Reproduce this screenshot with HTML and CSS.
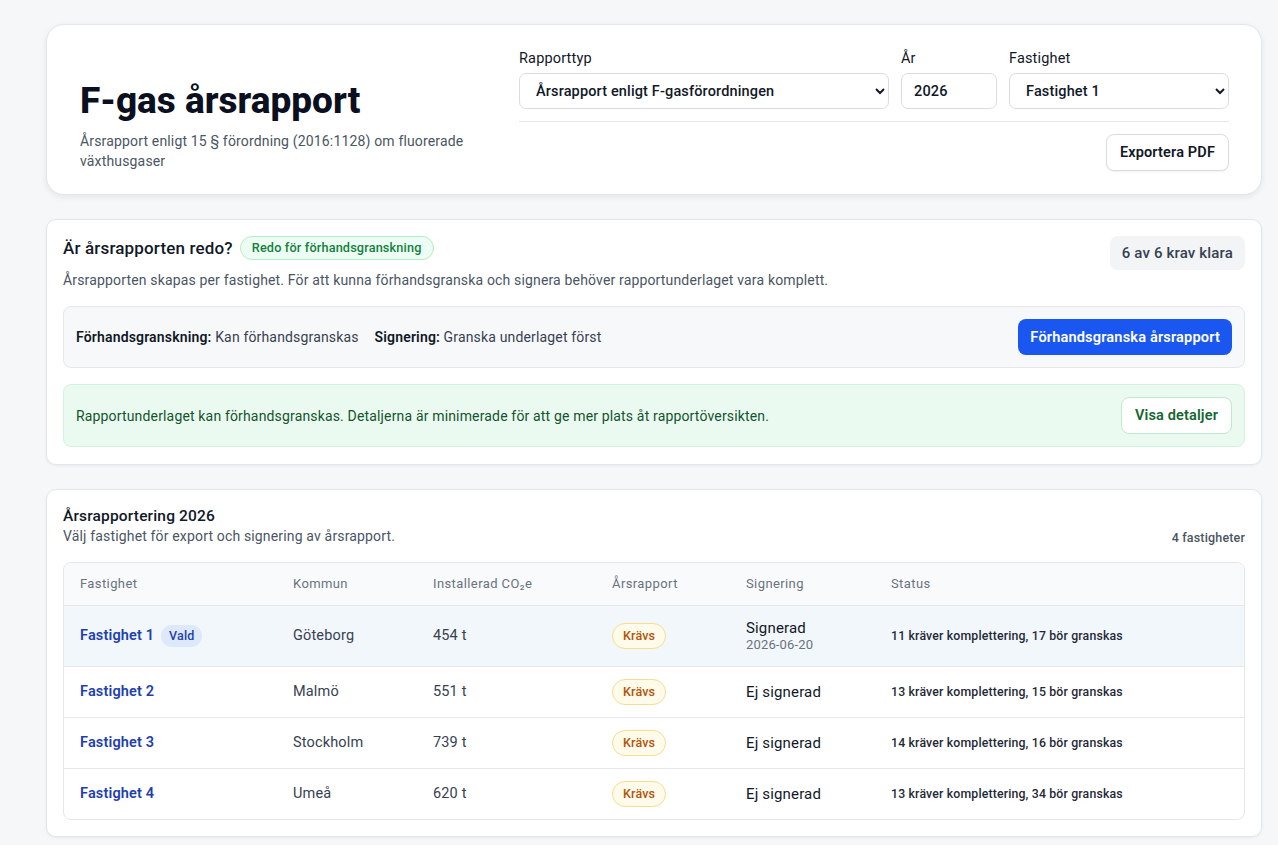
FILE: index.html
```html
<!DOCTYPE html>
<html lang="sv">
<head>
    <meta charset="UTF-8">
    <meta name="viewport" content="width=device-width, initial-scale=1.0">
    <title>F-gas årsrapport</title>
    <link rel="stylesheet" href="styles.css">
</head>
<body>
    <div class="page">
        <header class="card hero">
            <div class="hero-text">
                <h1>F-gas årsrapport</h1>
                <p>Årsrapport enligt 15 § förordning (2016:1128) om fluorerade växthusgaser</p>
            </div>
            <div class="hero-controls">
                <div class="filters">
                    <label class="field field-type">
                        <span>Rapporttyp</span>
                        <select>
                            <option>Årsrapport enligt F-gasförordningen</option>
                        </select>
                    </label>
                    <label class="field field-year">
                        <span>År</span>
                        <input type="text" value="2026">
                    </label>
                    <label class="field field-prop">
                        <span>Fastighet</span>
                        <select>
                            <option>Fastighet 1</option>
                            <option>Fastighet 2</option>
                            <option>Fastighet 3</option>
                            <option>Fastighet 4</option>
                        </select>
                    </label>
                </div>
                <div class="hero-actions">
                    <button class="btn btn-outline">Exportera PDF</button>
                </div>
            </div>
        </header>

        <section class="card ready">
            <div class="ready-head">
                <div>
                    <div class="ready-title">
                        <h2>Är årsrapporten redo?</h2>
                        <span class="badge badge-green">Redo för förhandsgranskning</span>
                    </div>
                    <p class="muted">Årsrapporten skapas per fastighet. För att kunna förhandsgranska och signera behöver rapportunderlaget vara komplett.</p>
                </div>
                <span class="count-pill">6 av 6 krav klara</span>
            </div>

            <div class="status-box">
                <div class="status-items">
                    <span><b>Förhandsgranskning:</b> Kan förhandsgranskas</span>
                    <span><b>Signering:</b> Granska underlaget först</span>
                </div>
                <button class="btn btn-primary">Förhandsgranska årsrapport</button>
            </div>

            <div class="notice">
                <span>Rapportunderlaget kan förhandsgranskas. Detaljerna är minimerade för att ge mer plats åt rapportöversikten.</span>
                <button class="btn btn-green">Visa detaljer</button>
            </div>
        </section>

        <section class="card overview">
            <div class="overview-head">
                <div>
                    <h3>Årsrapportering 2026</h3>
                    <p class="muted">Välj fastighet för export och signering av årsrapport.</p>
                </div>
                <span class="total">4 fastigheter</span>
            </div>

            <div class="table-wrap">
                <table>
                    <thead>
                        <tr>
                            <th class="col-name">Fastighet</th>
                            <th class="col-kommun">Kommun</th>
                            <th class="col-co2">Installerad CO₂e</th>
                            <th class="col-report">Årsrapport</th>
                            <th class="col-sign">Signering</th>
                            <th>Status</th>
                        </tr>
                    </thead>
                    <tbody>
                        <tr class="selected">
                            <td><a href="#" class="prop-link">Fastighet 1</a> <span class="badge badge-blue">Vald</span></td>
                            <td>Göteborg</td>
                            <td>454 t</td>
                            <td><span class="badge badge-amber">Krävs</span></td>
                            <td class="sign">Signerad<small>2026-06-20</small></td>
                            <td class="status">11 kräver komplettering, 17 bör granskas</td>
                        </tr>
                        <tr>
                            <td><a href="#" class="prop-link">Fastighet 2</a></td>
                            <td>Malmö</td>
                            <td>551 t</td>
                            <td><span class="badge badge-amber">Krävs</span></td>
                            <td class="sign">Ej signerad</td>
                            <td class="status">13 kräver komplettering, 15 bör granskas</td>
                        </tr>
                        <tr>
                            <td><a href="#" class="prop-link">Fastighet 3</a></td>
                            <td>Stockholm</td>
                            <td>739 t</td>
                            <td><span class="badge badge-amber">Krävs</span></td>
                            <td class="sign">Ej signerad</td>
                            <td class="status">14 kräver komplettering, 16 bör granskas</td>
                        </tr>
                        <tr>
                            <td><a href="#" class="prop-link">Fastighet 4</a></td>
                            <td>Umeå</td>
                            <td>620 t</td>
                            <td><span class="badge badge-amber">Krävs</span></td>
                            <td class="sign">Ej signerad</td>
                            <td class="status">13 kräver komplettering, 34 bör granskas</td>
                        </tr>
                    </tbody>
                </table>
            </div>
        </section>
    </div>
</body>
</html>
```

FILE: styles.css
```css
* {
    box-sizing: border-box;
}
body {
    margin: 0;
    font-family: Roboto, 'Liberation Sans', Arial, sans-serif;
    letter-spacing: 0.01em;
    color: #111827;
    background-color: #f6f7f9;
}
.page {
    padding: 24px 16px 24px 46px;
    display: flex;
    flex-direction: column;
    gap: 24px;
}
.card {
    background-color: white;
    border: 1px solid #e3e7ec;
    border-radius: 10px;
    box-shadow: 0 1px 3px rgba(15,23,42,0.06);
}
.muted {
    margin: 0;
    color: #4b5563;
    font-size: 14px;
    line-height: 20px;
}

/* header */
.hero {
    border-radius: 18px;
    padding: 25px 32px 23px 33px;
    display: flex;
    justify-content: space-between;
    align-items: center;
    box-shadow: 0 2px 6px rgba(15,23,42,0.08);
}
.hero h1 {
    margin: 0 0 8px;
    font-size: 37px;
    line-height: 44px;
    font-weight: 800;
    letter-spacing: 0;
    color: #0b1020;
}
.hero-text {
    padding-top: 28px;
}
.hero-text p {
    margin: 0;
    width: 385px;
    font-size: 14px;
    line-height: 20px;
    color: #4b5563;
}
.hero-controls {
    width: 710px;
}
.filters {
    display: flex;
    gap: 12px;
    padding-bottom: 12px;
    border-bottom: 1px solid #e5e7eb;
}
.field {
    display: flex;
    flex-direction: column;
    gap: 6px;
    font-size: 14.5px;
    font-weight: 400;
    color: #111827;
}
.field-type { width: 370px; }
.field-year { width: 96px; }
.field-prop { flex: 1; }
select, input {
    height: 36px;
    padding: 0 10px 0 12px;
    border: 1px solid #d9dde3;
    border-radius: 7px;
    background-color: white;
    font-family: inherit;
    font-size: 14.5px;
    font-weight: 500;
    letter-spacing: 0.01em;
    color: #111827;
}
.hero-actions {
    display: flex;
    justify-content: flex-end;
    padding-top: 12px;
}
.btn {
    font-family: inherit;
    font-size: 14.5px;
    font-weight: 600;
    letter-spacing: 0.01em;
    border-radius: 8px;
    cursor: pointer;
}
.btn-outline {
    height: 37px;
    padding: 0 13px;
    background-color: white;
    color: #111827;
    border: 1px solid #d9dde3;
    box-shadow: 0 1px 2px rgba(0,0,0,0.06);
}
.btn-primary {
    height: 36px;
    padding: 0 12px;
    font-size: 14.6px;
    background-color: #1a56f0;
    color: white;
    border: none;
}
.btn-green {
    height: 37px;
    padding: 0 13px;
    background-color: white;
    color: #166534;
    border: 1px solid #bfe9cf;
}

/* readiness */
.ready {
    padding: 16px 16px 17px;
}
.ready-head {
    display: flex;
    justify-content: space-between;
    align-items: flex-start;
}
.ready-title {
    display: flex;
    align-items: center;
    gap: 7px;
    margin-bottom: 10px;
}
.ready-title h2 {
    margin: 0;
    font-size: 17px;
    font-weight: 500;
}
.count-pill {
    padding: 8px 12px;
    border-radius: 8px;
    background-color: #f2f4f6;
    font-size: 15px;
    font-weight: 500;
    color: #374151;
}
.badge {
    display: inline-block;
    border-radius: 999px;
    font-size: 12px;
    font-weight: 500;
    line-height: 16px;
}
.badge-green {
    padding: 3px 11px;
    font-size: 12.7px;
    background-color: #ecfdf3;
    border: 1px solid #b7ebc9;
    color: #15803d;
}
.status-box {
    margin-top: 16px;
    padding: 12px;
    display: flex;
    justify-content: space-between;
    align-items: center;
    background-color: #f7f8fa;
    border: 1px solid #e5e7eb;
    border-radius: 8px;
    font-size: 14px;
    color: #374151;
}
.status-items {
    display: flex;
    gap: 16px;
}
.status-items b {
    color: #111827;
    font-weight: 600;
}
.notice {
    margin-top: 16px;
    padding: 12px;
    min-height: 63px;
    display: flex;
    justify-content: space-between;
    align-items: center;
    background-color: #ebfaf1;
    border: 1px solid #d4f2e0;
    border-radius: 8px;
    font-size: 14px;
    color: #14532d;
}

/* table card */
.overview {
    padding: 17px 16px 16px 16px;
}
.overview-head {
    display: flex;
    justify-content: space-between;
    align-items: flex-end;
    margin-bottom: 16px;
}
.overview-head h3 {
    margin: 0 0 1px;
    font-size: 15.5px;
    line-height: 18px;
    font-weight: 500;
}
.total {
    font-size: 12.5px;
    font-weight: 500;
    color: #4b5563;
    padding-bottom: 1px;
}
.table-wrap {
    border: 1px solid #e5e7eb;
    border-radius: 8px;
    overflow: hidden;
}
table {
    width: 100%;
    border-collapse: collapse;
    font-size: 14.5px;
}
th {
    height: 42px;
    padding: 0 16px;
    text-align: left;
    font-size: 13px;
    font-weight: 400;
    letter-spacing: 0.4px;
    color: #6b7280;
    background-color: #f8fafc;
    border-bottom: 1px solid #e5e7eb;
}
td {
    height: 51px;
    padding: 0 16px;
    color: #374151;
    border-bottom: 1px solid #e5e7eb;
}
tbody tr:last-child td {
    border-bottom: none;
}
tr.selected td {
    height: 61px;
    background-color: #f2f7fc;
}
.col-name { width: 213px; }
.col-kommun { width: 140px; }
.col-co2 { width: 179px; }
.col-report { width: 134px; }
.col-sign { width: 145px; }
.prop-link {
    color: #1e40af;
    font-weight: 600;
    text-decoration: none;
}
.badge-blue {
    margin-left: 3px;
    padding: 3px 8px;
    font-size: 12.5px;
    background-color: #dde8fb;
    color: #1e40af;
}
.badge-amber {
    padding: 4px 10px;
    font-size: 12.5px;
    background-color: #fffbea;
    border: 1px solid #f8dd8c;
    color: #b45309;
}
.sign {
    font-size: 15px;
    color: #111827;
    font-weight: 400;
}
.sign small {
    display: block;
    font-size: 13px;
    color: #6b7280;
}
.status {
    font-size: 12.3px;
    font-weight: 500;
    color: #1f2937;
}
```
